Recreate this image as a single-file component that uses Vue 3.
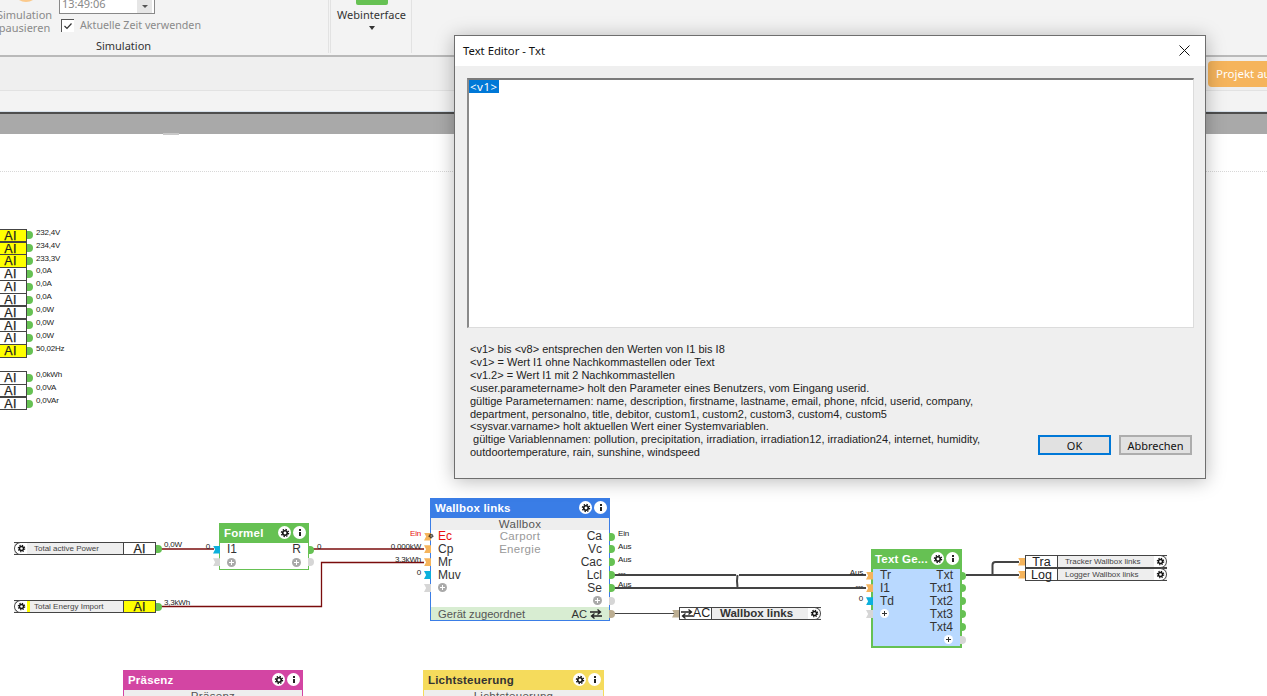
<template>
  <div class="app">
    <svg class="defs" width="0" height="0">
      <symbol id="gear" viewBox="0 0 12 12">
        <circle cx="6" cy="6" r="2.7" fill="none" stroke="#111" stroke-width="1.9" />
        <circle cx="6" cy="6" r="4.3" fill="none" stroke="#111" stroke-width="1.5" stroke-dasharray="1.7 1.68" />
      </symbol>
      <symbol id="swap" viewBox="0 0 12 10">
        <path d="M0 3h10M7.5 .6 10.5 3 7.5 5.4M12 7H2M4.500 4.600 1.500 7 4.500 9.400" fill="none" stroke="currentColor" stroke-width="1.3" />
      </symbol>
    </svg>

    <!-- RIBBON -->
    <header class="ribbon">
      <section class="group sim">
        <div class="group-body">
          <div class="pause">
            <span class="pause-icon"></span>
            <span>Simulation</span>
            <span>pausieren</span>
          </div>
          <div class="time-col">
            <div class="time-box">
              <span>13:49:06</span>
              <span class="spin"><i></i></span>
            </div>
            <label class="check">
              <span class="check-box">
                <svg width="10" height="8" viewBox="0 0 10 8"><path d="M1.500 4 4 6.500 8.500 1.500" fill="none" stroke="#333" stroke-width="1.2" /></svg>
              </span>
              Aktuelle Zeit verwenden
            </label>
          </div>
        </div>
        <div class="group-name">Simulation</div>
      </section>
      <section class="group web">
        <span class="web-icon"></span>
        <span>Webinterface</span>
        <span class="caret"></span>
      </section>
    </header>

    <!-- TOOLBAR -->
    <div class="toolbar">
      <button class="run-btn">Projekt ausführen</button>
    </div>
    <div class="subbar"></div>
    <div class="band"><span class="band-tab"></span></div>

    <!-- CANVAS -->
    <main class="canvas">
      <div class="ruler"></div>

      <svg class="wires" width="1267" height="562" viewBox="0 134 1267 562">
        <g fill="none" stroke="#7a0c0c" stroke-width="1.300">
          <path d="M160 549H214" />
          <path d="M313 549H424" />
          <path d="M160 606.500H321.500V562.500H424" />
        </g>
        <g fill="none" stroke="#444" stroke-width="2">
          <path d="M614 575H736M739 575H866" />
          <path d="M614 588H866" />
          <path d="M737.500 575Q736.500 581 737.500 587" />
          <path d="M966 575H1019" />
          <path d="M992.500 575V565Q992.500 562 995.500 562H1019" />
        </g>
        <path d="M614 613.500H674" fill="none" stroke="#444" stroke-width="1.200" />
      </svg>

      <!-- AI COLUMN -->
      <div class="ai-col">
        <div v-for="(item, i) in aiRows" :key="i" class="ai-row" :class="{ gap: i === 10 }">
          <span class="ai-box" :class="{ yellow: item.yellow }">AI</span>
          <span class="port green"></span>
          <span class="ai-val">{{ item.val }}</span>
        </div>
      </div>

      <!-- INPUT PILLS -->
      <div v-for="p in inputs" :key="p.label" class="pill in" :style="at(14, p.y)">
        <span class="cap left"><svg class="gear-sm"><use href="#gear" /></svg></span>
        <span class="pill-label" :class="{ flag: p.yellow }">{{ p.label }}</span>
        <span class="pill-type ai" :class="{ yellow: p.yellow }">AI</span>
        <span class="port green out"></span>
        <span class="pill-val">{{ p.val }}</span>
      </div>

      <!-- OUTPUT PILLS -->
      <div v-for="p in outputs" :key="p.type" class="pill outp" :style="at(1025, p.y)">
        <span class="port orange in-port"></span>
        <span class="pill-type">{{ p.type }}</span>
        <span class="pill-label">{{ p.label }}</span>
        <span class="cap right"><svg class="gear-sm"><use href="#gear" /></svg></span>
      </div>
      <div class="pill outp ac" :style="at(679, 607)">
        <span class="port tan in-port"></span>
        <span class="pill-type"><svg class="swap"><use href="#swap" /></svg>AC</span>
        <span class="pill-label">Wallbox links</span>
        <span class="cap right"><svg class="gear-sm"><use href="#gear" /></svg></span>
      </div>

      <!-- BLOCKS -->
      <div
        v-for="n in nodes"
        :key="n.title"
        class="node"
        :class="n.cls"
        :style="{ ...at(n.x, n.y), width: n.w + 'px', borderColor: n.color, background: n.bg }"
      >
        <div class="node-head" :style="{ background: n.color, color: n.headText || '#fff' }">
          <span class="node-title">{{ n.title }}</span>
          <span class="round"><svg class="gear-md"><use href="#gear" /></svg></span>
          <span class="round info"><i></i></span>
        </div>
        <div v-if="n.sub" class="node-sub">{{ n.sub }}</div>
        <div v-for="(r, i) in n.rows || []" :key="i" class="row">
          <span v-if="r.lp" class="port in-port" :class="r.lp"></span>
          <svg v-if="r.gear" class="port-gear"><use href="#gear" /></svg>
          <span v-if="r.lv" class="val left" :class="{ red: r.red }">{{ r.lv }}</span>
          <span v-if="r.l" class="lbl" :class="{ red: r.red }">{{ r.l }}</span>
          <span v-if="r.lplus" class="plus" :class="n.plus"></span>
          <span v-if="r.m" class="mid">{{ r.m }}</span>
          <span v-if="r.r" class="lbl end">{{ r.r }}</span>
          <span v-if="r.rplus" class="plus end" :class="n.plus"></span>
          <span v-if="r.rp" class="port out" :class="r.rp"></span>
          <span v-if="r.rv" class="val right">{{ r.rv }}</span>
        </div>
        <div v-if="n.footer" class="node-foot">
          <span>{{ n.footer }}</span>
          <span class="foot-ac">AC <svg class="swap"><use href="#swap" /></svg></span>
          <span class="port tan out"></span>
        </div>
      </div>
    </main>

    <!-- DIALOG -->
    <div class="dialog">
      <div class="dialog-title">
        <span>Text Editor - Txt</span>
        <svg class="close" width="11" height="11" viewBox="0 0 11 11"><path d="M.5 .5 10.500 10.500M10.500 .5 .5 10.500" stroke="#111" stroke-width="1" /></svg>
      </div>
      <div class="dialog-body">
        <div class="editor"><span class="selected">&lt;v1&gt;</span></div>
        <div class="dialog-bottom">
          <div class="help">
            <div v-for="line in helpLines" :key="line">{{ line }}</div>
          </div>
          <div class="buttons">
            <button class="btn primary">OK</button>
            <button class="btn">Abbrechen</button>
          </div>
        </div>
      </div>
    </div>
  </div>
</template>

<script setup>
const aiRows = [
  { val: '232,4V', yellow: true },
  { val: '234,4V', yellow: true },
  { val: '233,3V', yellow: true },
  { val: '0,0A' },
  { val: '0,0A' },
  { val: '0,0A' },
  { val: '0,0W' },
  { val: '0,0W' },
  { val: '0,0W' },
  { val: '50,02Hz', yellow: true },
  { val: '0,0kWh' },
  { val: '0,0VA' },
  { val: '0,0VAr' }
]

const inputs = [
  { y: 542, label: 'Total active Power', val: '0,0W' },
  { y: 600, label: 'Total Energy Import', val: '3,3kWh', yellow: true }
]

const outputs = [
  { y: 555, type: 'Tra', label: 'Tracker Wallbox links' },
  { y: 568, type: 'Log', label: 'Logger Wallbox links' }
]

const nodes = [
  {
    title: 'Formel', x: 219, y: 523, w: 90, color: '#66c153', bg: '#fff',
    rows: [
      { l: 'I1', lp: 'blue', lv: '0', r: 'R', rp: 'green', rv: '0' },
      { lplus: true, lp: 'grey', rplus: true, rp: 'grey' }
    ]
  },
  {
    title: 'Wallbox links', x: 430, y: 498, w: 180, color: '#3a7de6', bg: '#fff', sub: 'Wallbox',
    footer: 'Gerät zugeordnet',
    rows: [
      { l: 'Ec', lp: 'orange', lv: 'Ein', red: true, gear: true, m: 'Carport', r: 'Ca', rp: 'green', rv: 'Ein' },
      { l: 'Cp', lp: 'orange', lv: '0,000kW', m: 'Energie', r: 'Vc', rp: 'green', rv: 'Aus' },
      { l: 'Mr', lp: 'orange', lv: '3,3kWh', r: 'Cac', rp: 'green', rv: 'Aus' },
      { l: 'Muv', lp: 'blue', lv: '0', r: 'Lcl', rp: 'green', rv: '---' },
      { lplus: true, lp: 'grey', r: 'Se', rp: 'green', rv: 'Aus' },
      { rplus: true, rp: 'grey' }
    ]
  },
  {
    title: 'Text Ge...', x: 871, y: 549, w: 91, color: '#66c153', bg: '#b9d9ff', cls: 'thick', plus: 'light',
    rows: [
      { l: 'Tr', lp: 'orange', lv: 'Aus', r: 'Txt', rp: 'green' },
      { l: 'I1', lp: 'orange', lv: '---', r: 'Txt1', rp: 'green' },
      { l: 'Td', lp: 'blue', lv: '0', r: 'Txt2', rp: 'green' },
      { lplus: true, lp: 'grey', r: 'Txt3', rp: 'green' },
      { r: 'Txt4', rp: 'green' },
      { rplus: true, rp: 'grey' }
    ]
  },
  { title: 'Präsenz', x: 123, y: 670, w: 180, color: '#d345a3', bg: '#fff', sub: 'Präsenz' },
  { title: 'Lichtsteuerung', x: 423, y: 670, w: 181, color: '#f5db5c', bg: '#fff', sub: 'Lichtsteuerung', headText: '#333' }
]

const helpLines = [
  '<v1> bis <v8> entsprechen den Werten von I1 bis I8',
  '<v1> = Wert I1 ohne Nachkommastellen oder Text',
  '<v1.2> = Wert I1 mit 2 Nachkommastellen',
  '<user.parametername> holt den Parameter eines Benutzers, vom Eingang userid.',
  'gültige Parameternamen: name, description, firstname, lastname, email, phone, nfcid, userid, company,',
  'department, personalno, title, debitor, custom1, custom2, custom3, custom4, custom5',
  '<sysvar.varname> holt aktuellen Wert einer Systemvariablen.',
  ' gültige Variablennamen: pollution, precipitation, irradiation, irradiation12, irradiation24, internet, humidity,',
  'outdoortemperature, rain, sunshine, windspeed'
]

// canvas starts at y=134 in the window
function at(x, y) {
  return { left: x + 'px', top: y - 134 + 'px' }
}
</script>

<style>
html,
body {
  margin: 0;
  overflow: hidden;
}
</style>

<style scoped>
* {
  box-sizing: border-box;
}

.app {
  position: relative;
  width: 1267px;
  height: 696px;
  display: flex;
  flex-direction: column;
  overflow: hidden;
  background: #fff;
  font-family: "Liberation Sans", Arial, sans-serif;
}

.defs {
  position: absolute;
}

/* RIBBON */
.ribbon {
  height: 57px;
  flex: none;
  display: flex;
  align-items: flex-end;
  padding-bottom: 2px;
  overflow: hidden;
  background: #f3f3f3;
  border-bottom: 2px solid #b9b9b9;
  font-family: "Noto Sans", sans-serif;
  font-size: 11px;
  color: #444;
}

.group {
  height: 80px;
  border-right: 1px solid #e2e2e2;
}

.sim {
  width: 337px;
  margin-left: -8px;
  margin-right: 1px;
  display: flex;
  flex-direction: column;
  justify-content: flex-end;
}

.group-body {
  display: flex;
  align-items: flex-end;
}

.pause {
  width: 65px;
  display: flex;
  flex-direction: column;
  align-items: center;
  line-height: 13px;
  color: #8a8a8a;
  padding-bottom: 4px;
}

.pause-icon {
  width: 26px;
  height: 26px;
  margin-left: 2px;
  margin-bottom: 6px;
  border-radius: 50%;
  background: #fbc98b;
}

.time-col {
  display: flex;
  flex-direction: column;
  gap: 4px;
  margin-left: 2px;
  padding-bottom: 6px;
}

.time-box {
  width: 96px;
  height: 16px;
  display: flex;
  justify-content: space-between;
  padding-left: 2px;
  background: #fff;
  border: 1px solid #888;
  color: #888;
  line-height: 9px;
}

.spin {
  width: 15px;
  margin-right: 2px;
  background: #e6e6e6;
  display: flex;
  justify-content: center;
  align-items: center;
}

.spin i {
  border: 3px solid transparent;
  border-top: 3px solid #555;
  border-bottom: 0;
}

.check {
  display: flex;
  align-items: center;
  gap: 6px;
  margin-left: 2px;
  font-size: 10.700px;
  color: #8a8a8a;
}

.check-box {
  width: 13px;
  height: 13px;
  background: #fff;
  border-top: 1px solid #555;
  border-left: 1px solid #555;
  display: flex;
  align-items: center;
  justify-content: center;
}

.group-name {
  text-align: center;
  height: 15px;
  line-height: 15px;
  margin-left: -73px;
  color: #333;
}

.web {
  width: 82px;
  display: flex;
  flex-direction: column;
  align-items: center;
  justify-content: flex-end;
  padding: 0 0 31px 1px;
  border-left: 1px solid #e2e2e2;
  line-height: 14px;
  color: #333;
  position: relative;
}

.web-icon {
  width: 32px;
  height: 8px;
  margin-bottom: 3px;
  background: #66c153;
  border-radius: 2px;
}

.caret {
  position: absolute;
  bottom: 22px;
  border: 3px solid transparent;
  border-top: 4px solid #333;
  border-bottom: 0;
  transform: translateY(-1px);
}

/* TOOLBAR */
.toolbar {
  height: 34px;
  flex: none;
  display: flex;
  align-items: center;
  padding-left: 1208px;
  background: #efefef;
  border-bottom: 1px solid #e2e2e2;
}

.run-btn {
  flex: none;
  width: 130px;
  height: 26px;
  padding: 0 0 0 8px;
  text-align: left;
  border: 0;
  border-radius: 4px;
  background: #f5b45c;
  color: #fff;
  font-family: "Noto Sans", sans-serif;
  font-size: 11.500px;
}

.subbar {
  height: 21px;
  flex: none;
  background: #f3f3f3;
  border-bottom: 1px solid #d5dfe9;
}

.band {
  height: 22px;
  flex: none;
  position: relative;
  background: #a9a9a9;
  border-top: 2px solid #4d4d4d;
}

.band-tab {
  position: absolute;
  left: 163px;
  bottom: -1px;
  width: 16px;
  height: 2px;
  background: #c8c8c8;
}

/* CANVAS */
.canvas {
  position: relative;
  flex: 1;
  overflow: hidden;
}

.ruler {
  height: 38px;
  border-bottom: 1px dotted #d8d8d8;
}

.wires {
  position: absolute;
  left: 0;
  top: 0;
}

/* PORTS */
.port {
  display: block;
  flex: none;
  width: 6px;
  height: 8px;
}

.port.green,
.port.grey.out,
.port.tan.out {
  border-radius: 0 4px 4px 0;
}

.port.green {
  background: #66c153;
}

.port.grey {
  background: #d6d6d6;
}

.port.tan {
  background: #bcae92;
}

.port.orange {
  background: #f5b45c;
}

.port.blue {
  background: #0cb0dc;
}

.port.orange,
.port.blue,
.port.grey:not(.out),
.port.tan:not(.out) {
  clip-path: polygon(0 0, 100% 0, 100% 100%, 0 100%, 30% 50%);
}

.in-port {
  position: absolute;
  right: 100%;
  top: 2.500px;
  width: 7px;
}

.row > .out,
.node-foot > .out {
  position: absolute;
  left: 100%;
  top: 2.500px;
}

/* AI COLUMN */
.ai-col {
  position: absolute;
  left: -6px;
  top: 95px;
}

.ai-row {
  height: 12.850px;
  display: flex;
  align-items: center;
}

.ai-row.gap {
  margin-top: 14px;
}

.ai-box {
  width: 33px;
  height: 13.500px;
  flex: none;
  border: 1px solid #444;
  background: #fff;
  text-align: center;
  font-size: 12.500px;
  line-height: 12px;
  letter-spacing: 0.300px;
  color: #222;
  -webkit-text-stroke: 0.25px #222;
}

.ai-box.yellow {
  background: #ffff00;
}

.ai-val {
  margin: -6px 0 0 3px;
  font-size: 8px;
  letter-spacing: -0.200px;
  color: #222;
}

/* PILLS */
.pill {
  position: absolute;
  width: 142px;
  height: 13px;
  display: flex;
  border-top: 1px solid #444;
  border-bottom: 1px solid #444;
  background: #eee;
  font-size: 8px;
}

.cap {
  width: 13px;
  flex: none;
  height: 13px;
  margin-top: -1px;
  display: flex;
  align-items: center;
  justify-content: center;
  background: #fff;
  border: 1px solid #444;
}

.cap.left {
  border-right: 0;
  border-radius: 7px 0 0 7px;
}

.cap.right {
  border-left: 0;
  border-radius: 0 7px 7px 0;
}

.gear-sm {
  width: 9px;
  height: 9px;
}

.pill-label {
  flex: 1;
  padding-left: 7px;
  line-height: 11px;
  color: #444;
  white-space: nowrap;
  overflow: hidden;
}

.pill-label.flag {
  box-shadow: inset 3px 0 0 #ffff00;
}

.pill-type {
  width: 33px;
  flex: none;
  height: 13px;
  margin-top: -1px;
  border: 1px solid #444;
  background: #fff;
  text-align: center;
  font-size: 12.500px;
  line-height: 13px;
  color: #222;
}

.pill-type.ai {
  -webkit-text-stroke: 0.25px #222;
}

.pill-type.yellow {
  background: #ffff00;
}

.pill .out {
  position: absolute;
  left: 100%;
  top: 1.500px;
}

.pill .in-port {
  top: 1.500px;
}

.pill-val {
  position: absolute;
  left: calc(100% + 8px);
  top: -3px;
  color: #222;
  letter-spacing: -0.200px;
  white-space: nowrap;
}

.ac .pill-type {
  display: flex;
  align-items: center;
  justify-content: center;
}

.ac .pill-label {
  padding-left: 8px;
  font-size: 11.500px;
  font-weight: 700;
  color: #333;
}

.swap {
  width: 12px;
  height: 10px;
  color: #222;
}

/* BLOCKS */
.node {
  position: absolute;
  border: 1px solid;
  border-top: 0;
  font-size: 12px;
  color: #333;
}

.node.thick {
  border-width: 0 2px 2px;
}

.node-head {
  height: 20px;
  display: flex;
  align-items: center;
  gap: 2px;
  margin: 0 -1px;
  padding: 0 3px 1px 5px;
}

.node.thick .node-head {
  margin: 0 -2px;
  padding-left: 4px;
}

.node-title {
  flex: 1;
  font-size: 11.500px;
  font-weight: 700;
  white-space: nowrap;
  letter-spacing: 0.200px;
}

.round {
  width: 13px;
  height: 13px;
  flex: none;
  display: flex;
  align-items: center;
  justify-content: center;
  background: #fff;
  border-radius: 50%;
}

.gear-md {
  width: 10px;
  height: 10px;
}

.info i {
  width: 2px;
  height: 7px;
  background: linear-gradient(#222 2px, transparent 2px 3px, #222 3px);
}

.node-sub {
  height: 12px;
  line-height: 12px;
  background: #eee;
  text-align: center;
  font-size: 11.500px;
  color: #555;
  letter-spacing: 0.300px;
}

.row {
  position: relative;
  height: 12.850px;
  display: flex;
  align-items: center;
  justify-content: space-between;
  padding: 0 7px;
  line-height: 12px;
}

.lbl.red {
  color: #e81010;
}

.end {
  margin-left: auto;
}

.mid {
  position: absolute;
  left: 0;
  right: 0;
  text-align: center;
  font-size: 11.500px;
  color: #999;
  letter-spacing: 0.300px;
  pointer-events: none;
}

.plus {
  width: 9px;
  height: 9px;
  flex: none;
  border-radius: 50%;
  background: linear-gradient(#fff, #fff) center / 5px 1px no-repeat,
    linear-gradient(#fff, #fff) center / 1px 5px no-repeat,
    #a9a9a9;
}

.plus.light {
  background: linear-gradient(#333, #333) center / 5px 1px no-repeat,
    linear-gradient(#333, #333) center / 1px 5px no-repeat,
    #fff;
}

.port-gear {
  position: absolute;
  left: -3px;
  top: 3px;
  width: 6px;
  height: 6px;
}

.val {
  position: absolute;
  top: -1px;
  font-size: 8px;
  line-height: 9px;
  letter-spacing: -0.200px;
  color: #222;
  white-space: nowrap;
}

.val.left {
  right: calc(100% + 10px);
}

.val.right {
  left: calc(100% + 9px);
}

.val.red {
  color: #e81010;
}

.node-foot {
  position: relative;
  height: 13px;
  display: flex;
  justify-content: space-between;
  align-items: center;
  padding: 0 7px;
  background: #d8edd2;
  font-size: 11.200px;
  color: #555;
}

.foot-ac {
  display: flex;
  align-items: center;
  gap: 3px;
  color: #333;
}

/* DIALOG */
.dialog {
  position: absolute;
  left: 454px;
  top: 35px;
  width: 752px;
  height: 444px;
  display: flex;
  flex-direction: column;
  background: #efefef;
  border: 1px solid #6e6e6e;
  box-shadow: 0 2px 18px rgba(0, 0, 0, 0.28);
}

.dialog-title {
  height: 30px;
  flex: none;
  display: flex;
  justify-content: space-between;
  align-items: center;
  padding: 0 15px 2px 8px;
  background: #fff;
  font-family: "Noto Sans", sans-serif;
  font-size: 11.300px;
  color: #111;
}

.dialog-body {
  flex: 1;
  display: flex;
  flex-direction: column;
  padding: 12px 11px 0 12px;
}

.editor {
  height: 250px;
  flex: none;
  background: #fff;
  border: 1px solid #dcdcdc;
  border-top: 2px solid #7a7a7a;
  border-left: 2px solid #8a8a8a;
  font-family: "Noto Sans", sans-serif;
  font-size: 11.500px;
  line-height: 13px;
}

.selected {
  display: inline-block;
  padding: 0 1px;
  background: #0078d7;
  color: #fff;
  letter-spacing: 0.500px;
}

.dialog-bottom {
  display: flex;
  justify-content: space-between;
  padding: 15px 2px 0 3px;
}

.help {
  font-size: 11px;
  line-height: 12.900px;
  color: #222;
  white-space: pre;
}

.buttons {
  display: flex;
  gap: 8px;
  padding-top: 92px;
}

.btn {
  width: 73px;
  height: 20px;
  padding: 0;
  background: #e1e1e1;
  border: 2px solid #adadad;
  font-family: "Noto Sans", sans-serif;
  font-size: 11px;
  color: #111;
}

.btn.primary {
  border-color: #0078d7;
}
</style>
